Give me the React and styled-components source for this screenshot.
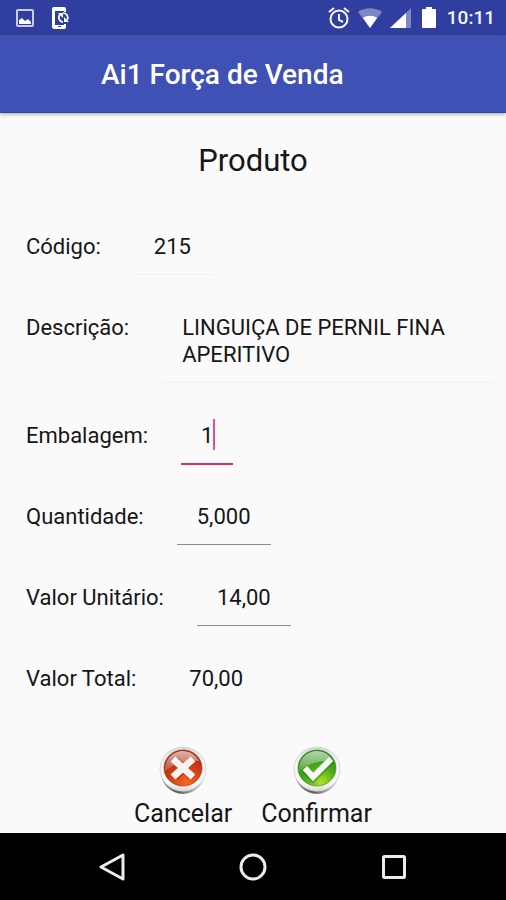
import {useState} from 'react';
import styled, {createGlobalStyle, css} from 'styled-components';

const GlobalStyle = createGlobalStyle`
  * {
    box-sizing: border-box;
  }
  body {
    margin: 0;
    background-color: #fafafa;
    color: #161616;
    font-family: Roboto, 'Liberation Sans', sans-serif;
  }
`;

const Screen = styled.div`
  display: flex;
  flex-direction: column;
  min-height: 100vh;
`;

const StatusBar = styled.div`
  display: flex;
  align-items: center;
  justify-content: space-between;
  height: 35px;
  padding: 0 11px 0 16px;
  background-color: #303f9f;
  color: #f4f5fb;
`;

const StatusGroup = styled.div`
  display: flex;
  align-items: center;
  gap: ${props => props.$gap};

  svg {
    display: block;
  }
`;

const Clock = styled.span`
  font-size: 19px;
  font-weight: 500;
  line-height: 24px;
`;

const AppBar = styled.header`
  display: flex;
  align-items: center;
  height: 78px;
  padding: 2px 101px 0;
  background-color: #3f51b5;
  border-bottom: 1px solid #34439c;
  box-shadow: 0 1px 4px rgba(0, 0, 0, 0.35);
  color: #fff;
`;

const AppTitle = styled.h1`
  margin: 0;
  font-size: 28px;
  font-weight: 500;
  line-height: 32px;
  white-space: nowrap;
`;

const Form = styled.form`
  display: flex;
  flex: 1;
  flex-direction: column;
`;

const PageTitle = styled.h2`
  margin: 30px 0 41px;
  font-size: 31px;
  font-weight: 400;
  line-height: 36px;
  text-align: center;
`;

const Fields = styled.div`
  display: flex;
  flex-direction: column;
  gap: 27px;
  padding: 0 11px 0 26px;
`;

const Field = styled.div`
  display: flex;
  align-items: flex-start;
  gap: 33px;
`;

const Label = styled.label`
  padding: 13px 0 14px;
  font-size: 22px;
  line-height: 27px;
  white-space: nowrap;
`;

const lines = {
  none: 'none',
  faint: '0 1px 0 #f1f1f1',
  normal: '0 1px 0 #8c8c8c',
  focus: '0 2px 0 #e02a74',
};

const control = css`
  display: block;
  margin: 0;
  padding: 13px 20px 14px;
  border: 0;
  outline: 0;
  background: transparent;
  box-shadow: ${props => lines[props.$line]};
  color: inherit;
  font-family: inherit;
  font-size: 22px;
  line-height: 27px;
`;

const Input = styled.input`
  ${control}
  width: ${props => props.$width};
  height: 54px;
  padding-right: 10px;
  caret-color: #e02a74;
`;

const TextArea = styled.textarea`
  ${control}
  flex: 1;
  min-width: 0;
  height: 81px;
  resize: none;
  overflow: hidden;
`;

const CaretBox = styled.div`
  position: relative;

  &::after {
    content: '';
    position: absolute;
    top: 10px;
    left: 32px;
    width: 2px;
    height: 31px;
    background-color: #e5508c;
  }
`;

const Actions = styled.div`
  display: flex;
  justify-content: center;
  gap: 29px;
  margin-top: auto;
  padding: 38px 0 3px;
`;

const ActionButton = styled.button`
  display: flex;
  flex-direction: column;
  align-items: center;
  gap: 3px;
  padding: 0;
  border: 0;
  background: none;
  color: inherit;
  font-family: inherit;
  font-size: 25px;
  line-height: 32px;
  cursor: pointer;
`;

const NavBar = styled.nav`
  display: grid;
  grid-template-columns: repeat(3, 1fr);
  height: 67px;
  padding: 0 42px;
  background-color: #000;
`;

const NavButton = styled.button`
  display: flex;
  align-items: center;
  justify-content: center;
  padding: 0;
  border: 0;
  background: none;
  color: #ececec;
`;

function PictureIcon() {
  return (
    <svg width="18" height="18" viewBox="0 0 18 18">
      <rect x="1" y="1" width="16" height="16" rx="1" fill="none" stroke="#c9cdec" strokeWidth="2" />
      <path d="M3 15v-4l3-2 3 3 3-2 3 3v2z" fill="#fff" />
    </svg>
  );
}

function PhoneSyncIcon() {
  return (
    <svg width="19" height="24" viewBox="0 0 19 24">
      <path
        d="M15 6V3a2 2 0 0 0-2-2H3a2 2 0 0 0-2 2v18a2 2 0 0 0 2 2h10a2 2 0 0 0 2-2v-3h-2v1H4V5h9v1z"
        fill="#fff"
      />
      <path d="M7 20.500h3" stroke="#303f9f" />
      <path
        d="M9 8.500a4.500 4.500 0 0 0 3 7.500M12 7a4.500 4.500 0 0 1 4 7"
        fill="none"
        stroke="#fff"
        strokeWidth="1.700"
      />
      <path d="M7 7h5v5zM18 16h-5v-5z" fill="#fff" />
    </svg>
  );
}

function AlarmIcon() {
  return (
    <svg width="22" height="22" viewBox="0 0 22 22" fill="none" stroke="#f4f5fb" strokeWidth="2">
      <circle cx="11" cy="12" r="8.500" />
      <path d="M1 5l5-4M21 5l-5-4M11 7v6l4 2" />
    </svg>
  );
}

function WifiIcon() {
  return (
    <svg width="24" height="20" viewBox="0 0 24 20">
      <path d="M12 20 0 4C7-1 17-1 24 4z" fill="#7d87c6" />
      <path d="M12 20 5 10c4-3 10-3 14 0z" fill="#fff" />
    </svg>
  );
}

function SignalIcon() {
  return (
    <svg width="21" height="20" viewBox="0 0 21 20">
      <path d="M21 0v20H0z" fill="#7d87c6" />
      <path d="M16 5v15H0z" fill="#fff" />
    </svg>
  );
}

function BatteryIcon() {
  return (
    <svg width="14" height="21" viewBox="0 0 14 21">
      <path d="M4 0h6v2h3a1 1 0 0 1 1 1v17a1 1 0 0 1-1 1H1a1 1 0 0 1-1-1V3a1 1 0 0 1 1-1h3z" fill="#fff" />
    </svg>
  );
}

// eslint-disable-next-line react/prop-types
function BadgeIcon({id, dark, mid, light, children}) {
  return (
    <svg width="48" height="49" viewBox="0 0 48 49">
      <defs>
        <linearGradient id={`${id}-edge`} x1="0" y1="0" x2="1" y2="0">
          <stop offset="0" stopColor="#8b8b8b" />
          <stop offset="0.4" stopColor="#5f5f5f" />
          <stop offset="0.8" stopColor="#b9b9b9" />
          <stop offset="1" stopColor="#d5d5d5" />
        </linearGradient>
        <linearGradient id={`${id}-rim`} x1="0" y1="0" x2="0" y2="1">
          <stop offset="0" stopColor="#d2d6d6" />
          <stop offset="0.3" stopColor="#f2f2f2" />
          <stop offset="0.8" stopColor="#fbfbfb" />
          <stop offset="1" stopColor="#dcdcdc" />
        </linearGradient>
        <radialGradient id={`${id}-face`} cx="0.6" cy="0.9" r="0.8">
          <stop offset="0" stopColor={light} />
          <stop offset="0.5" stopColor={mid} />
          <stop offset="1" stopColor={dark} />
        </radialGradient>
        <linearGradient id={`${id}-gloss`} x1="0" y1="0" x2="0" y2="1">
          <stop offset="0" stopColor="#fff" stopOpacity="0.65" />
          <stop offset="1" stopColor="#fff" stopOpacity="0.15" />
        </linearGradient>
      </defs>
      <ellipse cx="24" cy="26" rx="22" ry="22" fill={`url(#${id}-edge)`} />
      <ellipse cx="24" cy="23" rx="23" ry="22" fill={`url(#${id}-rim)`} stroke="#dadada" />
      <ellipse cx="24" cy="22" rx="19" ry="18" fill={`url(#${id}-face)`} stroke={dark} strokeOpacity="0.6" />
      <path d="M6 25a18 18 0 0 1 34-10C29 14 16 17 6 25z" fill={`url(#${id}-gloss)`} />
      {children}
    </svg>
  );
}

function CancelIcon() {
  return (
    <BadgeIcon id="cancel" dark="#a52b18" mid="#d84013" light="#f7681f">
      <path d="m16 14 17 17M33 14 16 31" stroke="#8f2412" strokeOpacity="0.5" strokeWidth="8" />
      <path d="m14 13 20 18M34 13 14 31" stroke="#f6f4f3" strokeWidth="7" />
    </BadgeIcon>
  );
}

function ConfirmIcon() {
  return (
    <BadgeIcon id="confirm" dark="#2f8a1c" mid="#4eae18" light="#b4e22c">
      <path d="m12 24 8 8 18-18" fill="none" stroke="#2b7a16" strokeOpacity="0.5" strokeWidth="8" />
      <path d="m12 22 8 9 18-18" fill="none" stroke="#f6f8f4" strokeWidth="6" />
    </BadgeIcon>
  );
}

// eslint-disable-next-line react/prop-types
function TextField({id, label, value, width, line, readOnly, onChange}) {
  return (
    <Field>
      <Label htmlFor={id}>{label}</Label>
      <Input
        id={id}
        value={value}
        readOnly={readOnly}
        onChange={onChange}
        $width={width}
        $line={line}
      />
    </Field>
  );
}

function App() {
  const [values, setValues] = useState({
    embalagem: '1',
    quantidade: '5,000',
    unitario: '14,00',
  });

  const update = e => setValues({...values, [e.target.id]: e.target.value});

  return (
    <Screen>
      <GlobalStyle />
      <StatusBar>
        <StatusGroup $gap="17px">
          <PictureIcon />
          <PhoneSyncIcon />
        </StatusGroup>
        <StatusGroup $gap="11px">
          <StatusGroup $gap="8px">
            <AlarmIcon />
            <WifiIcon />
            <SignalIcon />
          </StatusGroup>
          <BatteryIcon />
          <Clock>10:11</Clock>
        </StatusGroup>
      </StatusBar>
      <AppBar>
        <AppTitle>Ai1 Força de Venda</AppTitle>
      </AppBar>
      <Form onSubmit={e => e.preventDefault()}>
        <PageTitle>Produto</PageTitle>
        <Fields>
          <TextField id="codigo" label="Código:" value="215" width="80px" line="faint" readOnly />
          <Field>
            <Label htmlFor="descricao">Descrição:</Label>
            <TextArea
              id="descricao"
              value="LINGUIÇA DE PERNIL FINA APERITIVO"
              readOnly
              $line="faint"
            />
          </Field>
          <Field>
            <Label htmlFor="embalagem">Embalagem:</Label>
            <CaretBox>
              <Input
                id="embalagem"
                value={values.embalagem}
                onChange={update}
                $width="52px"
                $line="focus"
              />
            </CaretBox>
          </Field>
          <TextField
            id="quantidade"
            label="Quantidade:"
            value={values.quantidade}
            onChange={update}
            width="94px"
            line="normal"
          />
          <TextField
            id="unitario"
            label="Valor Unitário:"
            value={values.unitario}
            onChange={update}
            width="94px"
            line="normal"
          />
          <TextField id="total" label="Valor Total:" value="70,00" width="94px" line="none" readOnly />
        </Fields>
        <Actions>
          <ActionButton type="button">
            <CancelIcon />
            Cancelar
          </ActionButton>
          <ActionButton type="submit">
            <ConfirmIcon />
            Confirmar
          </ActionButton>
        </Actions>
      </Form>
      <NavBar>
        <NavButton aria-label="Voltar">
          <svg width="26" height="28" viewBox="0 0 26 28">
            <path d="M24 2v24L2 14z" fill="none" stroke="currentColor" strokeWidth="3" strokeLinejoin="round" />
          </svg>
        </NavButton>
        <NavButton aria-label="Início">
          <svg width="28" height="28" viewBox="0 0 28 28">
            <circle cx="14" cy="14" r="12" fill="none" stroke="currentColor" strokeWidth="3" />
          </svg>
        </NavButton>
        <NavButton aria-label="Recentes">
          <svg width="24" height="24" viewBox="0 0 24 24">
            <rect x="1.500" y="1.500" width="21" height="21" rx="1" fill="none" stroke="currentColor" strokeWidth="3" />
          </svg>
        </NavButton>
      </NavBar>
    </Screen>
  );
}

export default App;
